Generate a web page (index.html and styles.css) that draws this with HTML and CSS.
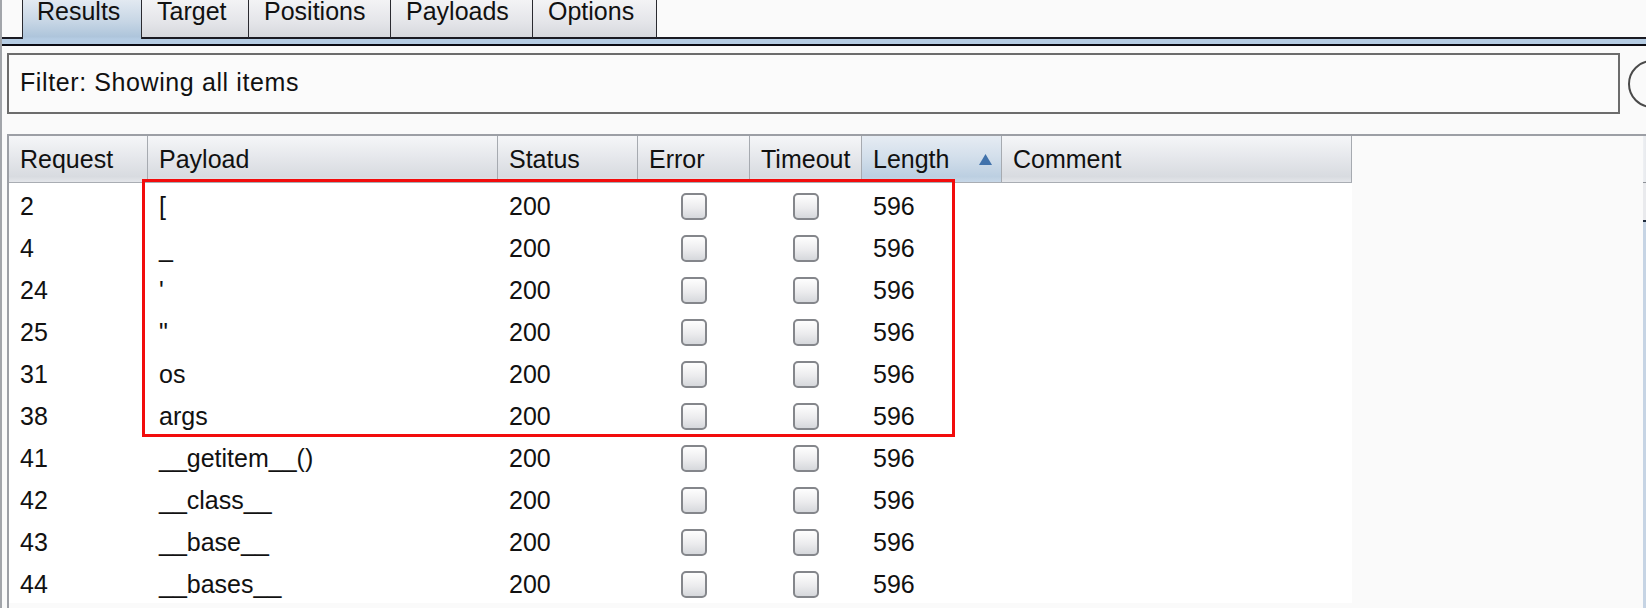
FILE: index.html
```html
<!DOCTYPE html>
<html>
<head>
<meta charset="utf-8">
<link rel="stylesheet" href="styles.css">
</head>
<body>
<div class="app">
  <div class="tabstrip">
    <div class="tab-lead"></div>
    <div class="tab tab-results active">Results</div>
    <div class="tab tab-target">Target</div>
    <div class="tab tab-positions">Positions</div>
    <div class="tab tab-payloads">Payloads</div>
    <div class="tab tab-options">Options</div>
    <div class="tab-fill"></div>
  </div>
  <div class="band"></div>
  <div class="panel">
    <div class="filter-row">
      <div class="filter">Filter: Showing all items</div>
      <svg class="help" width="50" height="50" viewBox="0 0 50 50"><circle cx="25" cy="25" r="23" fill="none" stroke="#4a4a4a" stroke-width="2"/></svg>
    </div>
    <div class="scrollpane">
      <div class="table">
        <div class="thead">
          <div class="th">Request</div>
          <div class="th">Payload</div>
          <div class="th">Status</div>
          <div class="th">Error</div>
          <div class="th">Timeout</div>
          <div class="th sorted"><span>Length</span><svg class="arrow" width="13" height="11" viewBox="0 0 13 11"><polygon points="6.5,0 13,11 0,11" fill="#4172ab"/></svg></div>
          <div class="th">Comment</div>
        </div>
        <div class="tbody">
          <div class="tr"><div class="td">2</div><div class="td">[</div><div class="td">200</div><div class="td cb"><span class="box"></span></div><div class="td cb"><span class="box"></span></div><div class="td">596</div><div class="td"></div></div>
          <div class="tr"><div class="td">4</div><div class="td">_</div><div class="td">200</div><div class="td cb"><span class="box"></span></div><div class="td cb"><span class="box"></span></div><div class="td">596</div><div class="td"></div></div>
          <div class="tr"><div class="td">24</div><div class="td">'</div><div class="td">200</div><div class="td cb"><span class="box"></span></div><div class="td cb"><span class="box"></span></div><div class="td">596</div><div class="td"></div></div>
          <div class="tr"><div class="td">25</div><div class="td">"</div><div class="td">200</div><div class="td cb"><span class="box"></span></div><div class="td cb"><span class="box"></span></div><div class="td">596</div><div class="td"></div></div>
          <div class="tr"><div class="td">31</div><div class="td">os</div><div class="td">200</div><div class="td cb"><span class="box"></span></div><div class="td cb"><span class="box"></span></div><div class="td">596</div><div class="td"></div></div>
          <div class="tr"><div class="td">38</div><div class="td">args</div><div class="td">200</div><div class="td cb"><span class="box"></span></div><div class="td cb"><span class="box"></span></div><div class="td">596</div><div class="td"></div></div>
          <div class="tr"><div class="td">41</div><div class="td">__getitem__()</div><div class="td">200</div><div class="td cb"><span class="box"></span></div><div class="td cb"><span class="box"></span></div><div class="td">596</div><div class="td"></div></div>
          <div class="tr"><div class="td">42</div><div class="td">__class__</div><div class="td">200</div><div class="td cb"><span class="box"></span></div><div class="td cb"><span class="box"></span></div><div class="td">596</div><div class="td"></div></div>
          <div class="tr"><div class="td">43</div><div class="td">__base__</div><div class="td">200</div><div class="td cb"><span class="box"></span></div><div class="td cb"><span class="box"></span></div><div class="td">596</div><div class="td"></div></div>
          <div class="tr"><div class="td">44</div><div class="td">__bases__</div><div class="td">200</div><div class="td cb"><span class="box"></span></div><div class="td cb"><span class="box"></span></div><div class="td">596</div><div class="td"></div></div>
        </div>
      </div>
      <div class="vscroll"><div class="vs-btn"></div><div class="vs-track"></div><div class="vs-thumb"></div></div>
      <div class="highlight"></div>
    </div>
  </div>
</div>
</body>
</html>
```
FILE: styles.css
```css
* { box-sizing: border-box; }
html, body {
  margin: 0;
  padding: 0;
  width: 1646px;
  height: 608px;
  overflow: hidden;
  background: #fafafa;
}
body {
  font-family: "Liberation Sans", Arial, sans-serif;
  font-size: 25px;
  color: #111;
}
.app {
  height: 608px;
  border-left: 2px solid #a2a5aa;
}
.tabstrip {
  display: flex;
  height: 39px;
}
.tab-lead {
  width: 20px;
  border-bottom: 2px solid #1a1a22;
}
.tab {
  height: 39px;
  line-height: 23px;
  padding-left: 15px;
  white-space: nowrap;
  border-right: 1px solid #2a2a30;
  border-bottom: 2px solid #1a1a22;
  background: linear-gradient(#f3f3f5, #e4e5e9 60%, #d6d8dd);
}
.tab.active {
  border-left: 1px solid #2a2a30;
  padding-left: 14px;
  border-bottom: none;
  background: linear-gradient(#e2e9f1, #c7d6e5 55%, #aec5db 94%, #b5cce3);
}
.tab-results { width: 120px; }
.tab-target { width: 107px; }
.tab-positions { width: 142px; }
.tab-payloads { width: 142px; }
.tab-options { width: 124px; }
.tab-fill {
  flex: 1;
  border-bottom: 2px solid #1a1a22;
}
.band {
  height: 7px;
  background: #b5cce3;
  border-bottom: 2px solid #0c0c14;
}
.panel {
  padding: 7px 0 0 5px;
}
.filter-row {
  display: flex;
  align-items: center;
  height: 61px;
}
.filter {
  flex: none;
  width: 1613px;
  height: 61px;
  border: 2px solid #6c6c6c;
  background: #fbfbfb;
  padding-left: 11px;
  line-height: 55px;
  letter-spacing: 0.6px;
  white-space: nowrap;
}
.help {
  flex: none;
  margin-left: 7px;
}
.scrollpane {
  position: relative;
  margin-top: 20px;
  display: flex;
  width: 1660px;
  height: 480px;
  border-top: 2px solid #9c9fa5;
  border-left: 2px solid #9c9fa5;
}
.table {
  width: 1634px;
  flex: none;
}
.thead, .tr {
  display: grid;
  grid-template-columns: 139px 350px 140px 112px 112px 140px 350px;
  width: 1343px;
}
.thead {
  height: 47px;
  border-bottom: 1px solid #a9adb3;
}
.th {
  height: 46px;
  line-height: 46px;
  padding-left: 11px;
  border-right: 1px solid #a6aab0;
  background: linear-gradient(#f5f6f8, #e6e8ec 45%, #d8dbe0 88%, #e4e6ea);
  white-space: nowrap;
}
.th.sorted {
  display: flex;
  align-items: center;
  justify-content: space-between;
  padding-right: 9px;
  background: linear-gradient(#e6ecf3, #d3dfeb 45%, #bccfe1 88%, #c8d8e8);
}
.arrow { flex: none; }
.tbody {
  background: #fff;
  width: 1343px;
}
.tr {
  height: 42px;
}
.td {
  height: 42px;
  padding-top: 4px;
  padding-left: 11px;
  line-height: 38px;
  white-space: nowrap;
}
.td.cb {
  display: flex;
  align-items: center;
  justify-content: center;
  padding-left: 0;
}
.box {
  display: block;
  width: 26px;
  height: 27px;
  border: 2px solid #84868b;
  border-radius: 5px;
  background: linear-gradient(#fefefe, #ececee 55%, #d6d8dc);
}
.vscroll {
  width: 18px;
  flex: none;
  display: flex;
  flex-direction: column;
}
.vs-btn {
  height: 47px;
  background: linear-gradient(to right, #eef0f3, #c9ccd2);
  border-bottom: 1px solid #8d9096;
}
.vs-track {
  height: 37px;
  background: #e9eaed;
}
.vs-thumb {
  flex: 1;
  border-top: 2px solid #1e2a3c;
  background: #c6d4e4;
}
.highlight {
  position: absolute;
  left: 133px;
  top: 43px;
  width: 813px;
  height: 258px;
  border: 3px solid #f20c0c;
  pointer-events: none;
}
```
